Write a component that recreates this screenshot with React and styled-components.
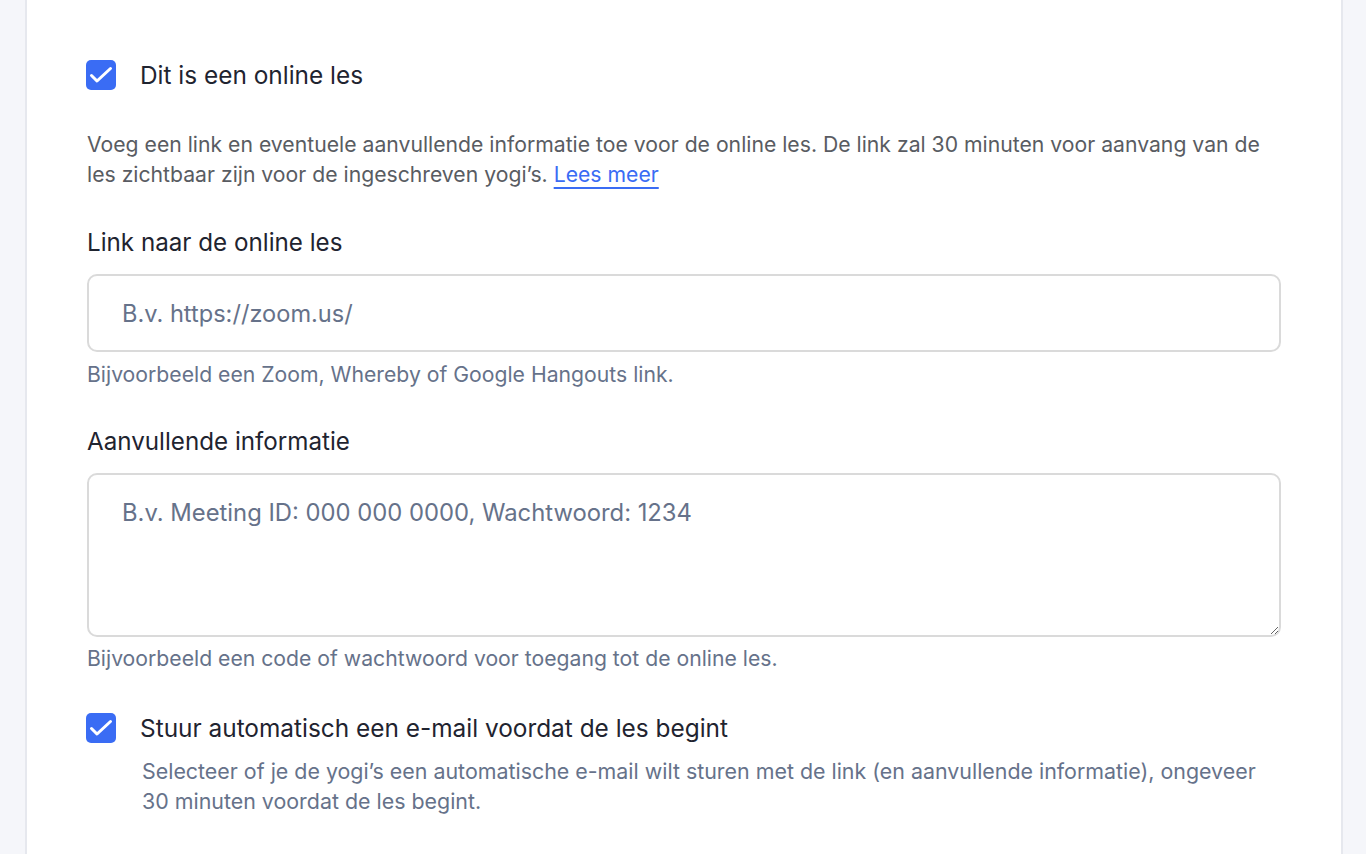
import React from "react";
import styled, { createGlobalStyle } from "styled-components";

const GlobalStyle = createGlobalStyle`
  * { box-sizing: border-box; }
  body {
    margin: 0;
    background: #f5f6fa;
    font-family: Inter, "Noto Sans", sans-serif;
    -webkit-font-smoothing: antialiased;
  }
`;

const Page = styled.div`
  min-height: 100vh;
  padding: 0 23px 0 25px;
`;

const Card = styled.div`
  background: #fff;
  border-left: 2px solid #e6e8ee;
  border-right: 2px solid #e6e8ee;
  min-height: 100vh;
  padding: 60px 60px 0 60px;
`;

const CheckRow = styled.label`
  display: flex;
  align-items: center;
  gap: 24px;
  margin-left: -1px;
  cursor: pointer;
`;

const Box = styled.span`
  width: 30px;
  height: 30px;
  border-radius: 5px;
  background: #3a6cf4;
  display: flex;
  align-items: center;
  justify-content: center;
  flex-shrink: 0;
`;

const CheckLabel = styled.span`
  font-size: 24.4px;
  line-height: 30px;
  color: #1f2430;
`;

const Intro = styled.p`
  margin: 39px 0 0;
  font-size: 21.2px;
  line-height: 30px;
  color: #595c62;
`;

const Link = styled.a`
  color: #3a6cf4;
  text-decoration: underline;
  text-decoration-thickness: 2px;
  text-underline-offset: 5px;
`;

const Field = styled.div`
  margin-top: ${({ $top }) => $top}px;
`;

const Label = styled.div`
  font-size: 24.2px;
  line-height: 28px;
  color: #1f2430;
  margin-bottom: 17px;
`;

const Input = styled.input`
  display: block;
  width: 100%;
  height: 78px;
  border: 2px solid #dadada;
  border-radius: 10px;
  padding: 0 33px;
  font-family: inherit;
  font-size: 23.6px;
  color: #1f2430;
  outline: none;
  &::placeholder { color: #66728a; }
`;

const TextArea = styled.textarea`
  display: block;
  width: 100%;
  height: 164px;
  border: 2px solid #dadada;
  border-radius: 10px;
  padding: 24px 33px;
  font-family: inherit;
  font-size: 23.8px;
  line-height: 28px;
  color: #1f2430;
  outline: none;
  resize: vertical;
  &::placeholder { color: #66728a; }
`;

const Help = styled.div`
  margin-top: ${({ $top }) => $top}px;
  font-size: 21.2px;
  line-height: 26px;
  color: #66728a;
`;

const SubHelp = styled.p`
  margin: 13px 0 0 55px;
  font-size: 21.4px;
  line-height: 30px;
  color: #66728a;
`;

function Check() {
  return (
    <Box>
      <svg width="30" height="30" viewBox="0 0 30 30" fill="none">
        <path d="M5.5 15.5l5.5 5.5L24.5 8.5" stroke="#fff" strokeWidth="3" strokeLinecap="round" strokeLinejoin="round" />
      </svg>
    </Box>
  );
}

export default function App() {
  return (
    <>
      <GlobalStyle />
      <Page>
        <Card>
          <CheckRow>
            <Check />
            <CheckLabel>Dit is een online les</CheckLabel>
          </CheckRow>

          <Intro>
            Voeg een link en eventuele aanvullende informatie toe voor de online les. De link zal 30 minuten voor aanvang van de
            les zichtbaar zijn voor de ingeschreven yogi’s. <Link href="#">Lees meer</Link>
          </Intro>

          <Field $top={40}>
            <Label>Link naar de online les</Label>
            <Input placeholder="B.v. https://zoom.us/" />
            <Help $top={9}>Bijvoorbeeld een Zoom, Whereby of Google Hangouts link.</Help>
          </Field>

          <Field $top={41}>
            <Label>Aanvullende informatie</Label>
            <TextArea placeholder="B.v. Meeting ID: 000 000 0000, Wachtwoord: 1234" />
            <Help $top={8}>Bijvoorbeeld een code of wachtwoord voor toegang tot de online les.</Help>
          </Field>

          <Field $top={42}>
            <CheckRow>
              <Check />
              <CheckLabel>Stuur automatisch een e-mail voordat de les begint</CheckLabel>
            </CheckRow>
            <SubHelp>
              Selecteer of je de yogi’s een automatische e-mail wilt sturen met de link (en aanvullende informatie), ongeveer
              30 minuten voordat de les begint.
            </SubHelp>
          </Field>
        </Card>
      </Page>
    </>
  );
}
